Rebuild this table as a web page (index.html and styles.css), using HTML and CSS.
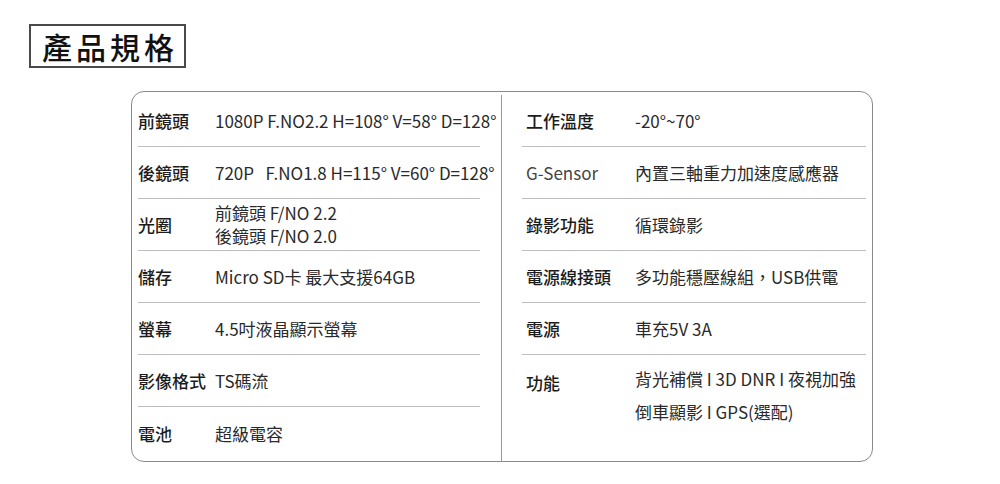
FILE: index.html
```html
<!DOCTYPE html>
<html lang="zh-Hant">
<head>
<meta charset="utf-8">
<link rel="stylesheet" href="styles.css">
</head>
<body>
<div class="page">
  <h1 class="title">產品規格</h1>
  <div class="card">
    <div class="col col-left">
      <div class="row"><span class="label">前鏡頭</span><span class="value">1080P F.NO2.2 H=108° V=58° D=128°</span></div>
      <div class="row"><span class="label">後鏡頭</span><span class="value">720P&nbsp;&nbsp; F.NO1.8 H=115° V=60° D=128°</span></div>
      <div class="row"><span class="label">光圈</span><span class="value multi">前鏡頭 F/NO 2.2<br>後鏡頭 F/NO 2.0</span></div>
      <div class="row"><span class="label">儲存</span><span class="value">Micro SD卡 最大支援64GB</span></div>
      <div class="row"><span class="label">螢幕</span><span class="value">4.5吋液晶顯示螢幕</span></div>
      <div class="row"><span class="label">影像格式</span><span class="value">TS碼流</span></div>
      <div class="row last"><span class="label">電池</span><span class="value">超級電容</span></div>
    </div>
    <div class="col col-right">
      <div class="row"><span class="label">工作溫度</span><span class="value">-20°~70°</span></div>
      <div class="row"><span class="label light">G-Sensor</span><span class="value">內置三軸重力加速度感應器</span></div>
      <div class="row"><span class="label">錄影功能</span><span class="value">循環錄影</span></div>
      <div class="row"><span class="label">電源線接頭</span><span class="value">多功能穩壓線組，USB供電</span></div>
      <div class="row"><span class="label">電源</span><span class="value">車充5V 3A</span></div>
      <div class="row last tall"><span class="label">功能</span><span class="value">背光補償 I 3D DNR I 夜視加強<br>倒車顯影 I GPS(選配)</span></div>
    </div>
  </div>
</div>
</body>
</html>
```

FILE: styles.css
```css
html, body {
  margin: 0;
  padding: 0;
  background: #fff;
}
body {
  width: 1000px;
  height: 484px;
  overflow: hidden;
  font-family: "Noto Sans CJK TC", "Noto Sans", sans-serif;
  color: #222;
}
.page {
  padding: 24px 0 0 29px;
}
.title {
  margin: 0;
  box-sizing: border-box;
  width: 157px;
  height: 44px;
  border: 2px solid #4a4a4a;
  font-size: 30px;
  font-weight: 500;
  letter-spacing: 4px;
  line-height: 40px;
  padding-left: 11px;
  color: #111;
}
.card {
  margin: 23px 0 0 102px;
  box-sizing: border-box;
  width: 742px;
  height: 371px;
  border: 1px solid #8a8a8a;
  border-radius: 13px;
  display: grid;
  grid-template-columns: 370px 1fr;
  padding-top: 3px;
}
.col {
  display: flex;
  flex-direction: column;
}
.col-left {
  border-right: 1px solid #9a9a9a;
  padding: 0 21px 0 6px;
}
.col-right {
  padding: 0 6px 0 20px;
}
.row {
  height: 52px;
  box-sizing: border-box;
  display: flex;
  align-items: center;
  border-bottom: 1px solid #bdbdbd;
  font-size: 17px;
  white-space: nowrap;
}
.row.last {
  border-bottom: none;
}
.label {
  font-weight: 500;
  color: #1c1c1c;
  flex: none;
}
.col-left .label {
  min-width: 77px;
}
.col-right .label {
  min-width: 87px;
  margin-right: 22px;
  margin-left: 4px;
}
.label.light {
  font-weight: 400;
  color: #444;
}
.value {
  color: #2a2a2a;
  font-weight: 400;
}
.value.multi {
  line-height: 23px;
  margin-top: -1px;
}
.row.tall {
  height: auto;
  align-items: flex-start;
  padding-top: 7px;
}
.row.tall .label {
  line-height: 33px;
  margin-top: 4px;
}
.row.tall .value {
  line-height: 33px;
}
```
